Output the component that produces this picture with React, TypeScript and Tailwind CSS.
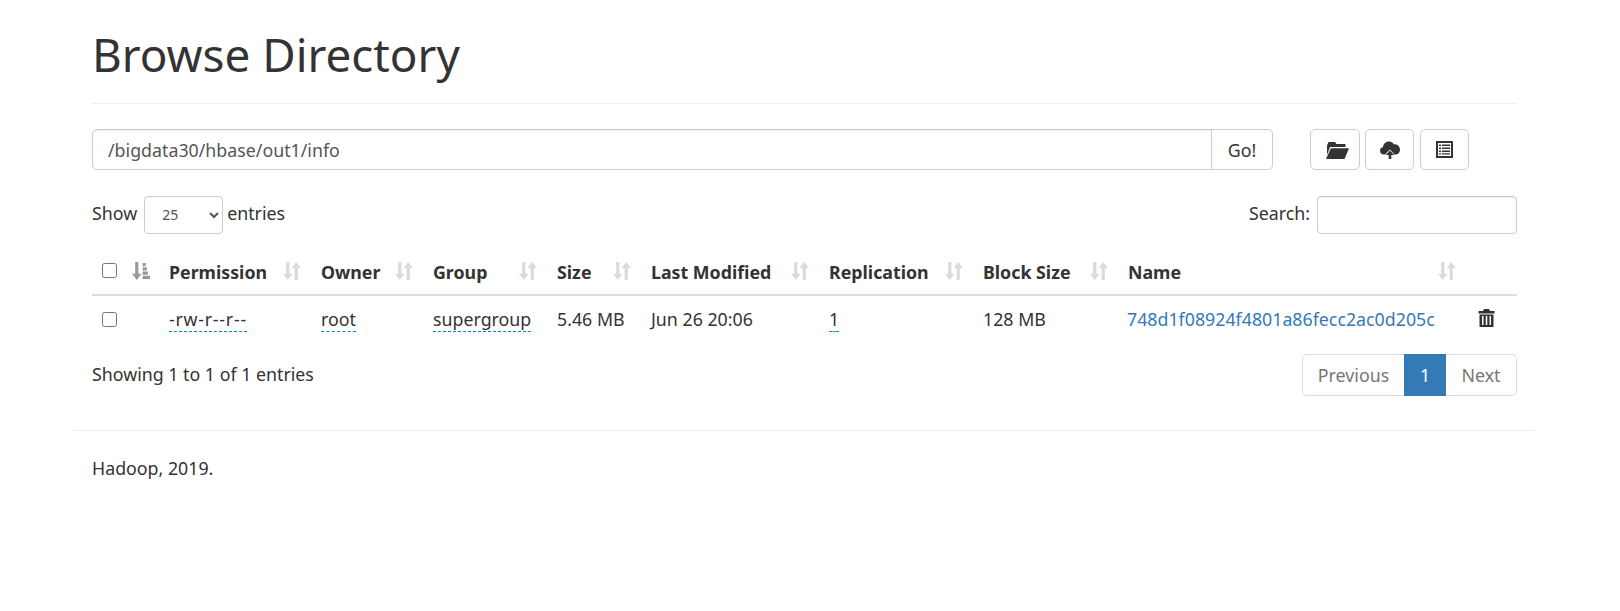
const font = "font-['Noto_Sans','Open_Sans',sans-serif]";

function SortIcon({ active = false, right }: { active?: boolean; right: string }) {
  return (
    <svg
      viewBox="0 0 17 17"
      className={`absolute top-[12px] w-[18px] h-[18px] ${right}`}
      fill={active ? '#999999' : '#dadada'}
    >
      {active ? (
        <>
          <path d="M3 0h3v11h3l-4.5 6L0 11h3z" />
          <path d="M10 1h3v3h-3zM10 5h4v3h-4zM10 9h5v3h-5zM10 13h7v3h-7z" />
        </>
      ) : (
        <>
          <path d="M3 0h3v11h3l-4.5 6L0 11h3z" />
          <path d="M12.5 0L17 6h-3v11h-3V6H8z" />
        </>
      )}
    </svg>
  );
}

function Editable({ children, wide = false }: { children: string; wide?: boolean }) {
  return (
    <span className={`border-b border-dashed border-[#0088cc] ${wide ? 'tracking-[0.75px]' : ''}`}>{children}</span>
  );
}

const columns = [
  { label: 'Permission', width: 'w-[152px]' },
  { label: 'Owner', width: 'w-[112px]' },
  { label: 'Group', width: 'w-[124px]' },
  { label: 'Size', width: 'w-[94px]' },
  { label: 'Last Modified', width: 'w-[178px]' },
  { label: 'Replication', width: 'w-[154px]' },
  { label: 'Block Size', width: 'w-[145px]' },
  { label: 'Name', width: 'w-[348px]' },
];

export default function App() {
  return (
    <div className={`${font} text-[17.8px] leading-[24px] text-[#333333] bg-white min-h-[611px]`}>
      <div className="ml-[73px] w-[1462px]">
        <div className="pl-[19px] pr-[18px]">
          <div className="h-[104px] border-b border-[#eeeeee] pt-[27px]">
            <h1 className="text-[45.8px] leading-[54px] font-normal">Browse Directory</h1>
          </div>

          <div className="flex mt-[25px] h-[41px]">
            <div className="flex w-[1181px]">
              <input
                readOnly
                defaultValue="/bigdata30/hbase/out1/info"
                className="flex-1 px-[15px] border border-[#cccccc] rounded-l-[5px] text-[#555555] outline-none shadow-[inset_0_1px_1px_rgba(0,0,0,0.075)]"
              />
              <button className="w-[61px] border border-l-0 border-[#cccccc] rounded-r-[5px]">Go!</button>
            </div>
            <div className="flex ml-[37px]">
              <button className="w-[50px] pl-[3px] border border-[#cccccc] rounded-[5px] flex items-center justify-center">
                <svg viewBox="0 0 24 18" className="w-[24px] h-[18px]" fill="#333333">
                  <path d="M2 4.5 L3.5 1 H10 L11.5 3 H20.5 V6 H5 L2 14z" />
                  <path d="M5.8 7.2 H24 L19.5 18 H1z" />
                </svg>
              </button>
              <button className="w-[49px] ml-[5px] border border-[#cccccc] rounded-[5px] flex items-center justify-center">
                <svg viewBox="0 0 20 18" className="w-[20px] h-[18px]" fill="#333333">
                  <path d="M5 13.5 H4 C1.5 13.5 0 11.8 0 9.7 C0 7.8 1.4 6.4 3 6.1 C3.2 3 5.6 0.5 9 0.5 C11.2 0.5 13 1.6 13.9 3.4 C16.9 3 20 5.2 20 8.7 C20 11.5 18 13.5 15.5 13.5 H14.5 L10 8.5z" />
                  <path d="M10 9.5 L14.2 14 H11.3 V18 H8.7 V14 H5.8z" />
                </svg>
              </button>
              <button className="w-[49px] ml-[6px] border border-[#cccccc] rounded-[5px] flex items-center justify-center">
                <svg viewBox="0 0 17 17" className="w-[17px] h-[17px]" fill="#333333">
                  <path
                    fillRule="evenodd"
                    d="M0 0h17v17H0z M2 2v13h13V2z M3 3.5h2v1.6H3z M6 3.5h8v1.6H6z M3 6.5h2v1.6H3z M6 6.5h8v1.6H6z M3 9.5h2v1.6H3z M6 9.5h8v1.6H6z M3 12.2h2v1.4H3z M6 12.2h8v1.4H6z"
                  />
                </svg>
              </button>
            </div>
          </div>

          <div className="flex items-start justify-between mt-[26px] h-[38px]">
            <div className="flex items-center h-[34px]">
              <span className="mr-[7px]">Show</span>
              <select
                defaultValue="25"
                className="w-[79px] h-[38px] mt-[3px] mr-[4px] pl-[13px] text-[14px] text-[#555555] border border-[#cccccc] rounded-[4px] bg-white"
              >
                <option value="25">25</option>
              </select>
              <span>entries</span>
            </div>
            <div className="flex items-center h-[34px] gap-[7px]">
              <span>Search:</span>
              <input className="w-[200px] h-[38px] mt-[3px] border border-[#cccccc] rounded-[4px] shadow-[inset_0_1px_1px_rgba(0,0,0,0.075)]" />
            </div>
          </div>

          <table className="w-[1425px] table-fixed border-collapse mt-[16px]">
            <colgroup>
              <col className="w-[67px]" />
              {columns.map((col) => (
                <col key={col.label} className={col.width} />
              ))}
              <col className="w-[51px]" />
            </colgroup>
            <thead>
              <tr className="h-[45px] border-b-2 border-[#dddddd]">
                <th className="relative pl-[10px] pb-[3px] text-left">
                  <input type="checkbox" className="block w-[15px] h-[15px]" />
                  <SortIcon active right="right-[9px]" />
                </th>
                {columns.map((col) => (
                  <th key={col.label} className="relative pl-[10px] text-left font-bold">
                    {col.label}
                    <SortIcon right="right-[10px]" />
                  </th>
                ))}
                <th />
              </tr>
            </thead>
            <tbody>
              <tr className="h-[48px]">
                <td className="pl-[10px] pb-[1px]">
                  <input type="checkbox" className="block w-[15px] h-[15px]" />
                </td>
                <td className="pl-[10px] pb-[2px]"><Editable wide>-rw-r--r--</Editable></td>
                <td className="pl-[10px] pb-[2px]"><Editable>root</Editable></td>
                <td className="pl-[10px] pb-[2px]"><Editable>supergroup</Editable></td>
                <td className="pl-[10px] pb-[2px]">5.46 MB</td>
                <td className="pl-[10px] pb-[2px]">Jun 26 20:06</td>
                <td className="pl-[10px] pb-[2px]"><Editable>1</Editable></td>
                <td className="pl-[10px] pb-[2px]">128 MB</td>
                <td className="pl-[9px] pb-[2px] text-[#337ab7]">748d1f08924f4801a86fecc2ac0d205c</td>
                <td className="pl-[12px] pb-[3px]">
                  <svg viewBox="0 0 17 18" className="block w-[17px] h-[18px]" fill="#333333">
                    <path d="M6 0h5l1 2h4.5v2.5H.5V2H5z" />
                    <path
                      fillRule="evenodd"
                      d="M1.5 5.5h14V18h-14z M4 7v9h1.5V7z M7.7 7v9h1.6V7z M11.5 7v9H13V7z"
                    />
                  </svg>
                </td>
              </tr>
            </tbody>
          </table>

          <div className="flex items-start justify-between mt-[11px] h-[42px]">
            <div className="pt-[8px]">Showing 1 to 1 of 1 entries</div>
            <div className="flex h-[42px] border border-[#dddddd] rounded-[5px] text-[#777777] bg-white">
              <span className="w-[101px] flex items-center justify-center">Previous</span>
              <span className="w-[42px] flex items-center justify-center bg-[#337ab7] text-white -my-[1px]">1</span>
              <span className="flex-1 w-[70px] flex items-center justify-center">Next</span>
            </div>
          </div>
        </div>

        <div className="mt-[34px] border-t border-[#eeeeee] px-[19px] pt-[25px]">Hadoop, 2019.</div>
      </div>
    </div>
  );
}
